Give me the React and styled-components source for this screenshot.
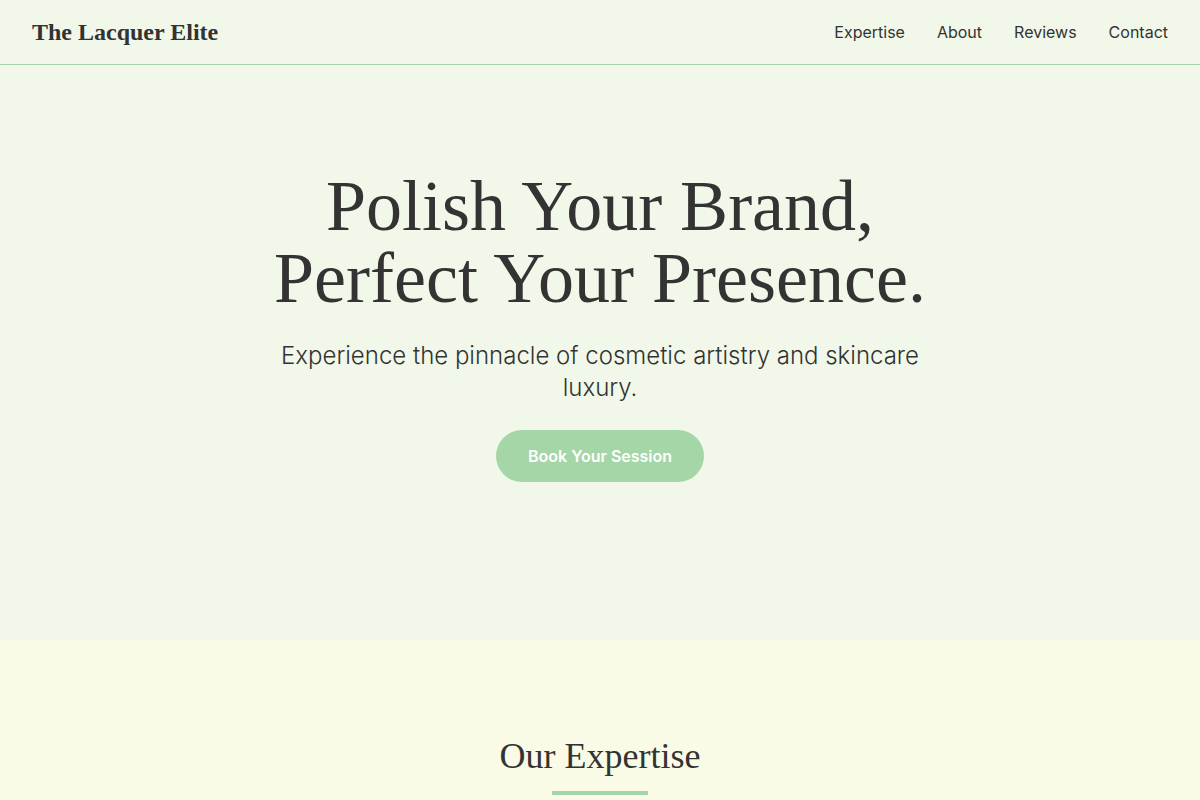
import styled, { createGlobalStyle } from 'styled-components';

const GlobalStyle = createGlobalStyle`
    * { box-sizing: border-box; }
    body {
        margin: 0;
        background: #f1f8e9;
        color: #333333;
        font-family: Inter, "Noto Sans", sans-serif;
    }
`

const Header = styled.header`
    height: 65px;
    display: flex;
    align-items: center;
    justify-content: space-between;
    padding: 0 32px;
    border-bottom: 1px solid #a5d6a7;
    background: #f1f8e9;
`

const Logo = styled.div`
    font-family: "Liberation Serif", "Times New Roman", serif;
    font-weight: bold;
    font-size: 24px;
    color: #333333;
`

const Nav = styled.nav`
    display: flex;
    gap: 32px;
`

const NavLink = styled.a`
    font-size: 16px;
    color: #333333;
    text-decoration: none;
    cursor: pointer;
`

const Hero = styled.section`
    height: 575px;
    display: flex;
    flex-direction: column;
    align-items: center;
    padding: 105px 24px 0;
    text-align: center;
`

const Title = styled.h1`
    font-family: "Liberation Serif", "Times New Roman", serif;
    font-weight: normal;
    font-size: 72px;
    line-height: 72px;
    margin: 0 0 26px;
    color: #333333;
`

const Subtitle = styled.p`
    font-size: 24px;
    font-weight: 300;
    line-height: 32px;
    max-width: 650px;
    margin: 0 0 26px;
    color: #333333;
`

const Button = styled.button`
    font-family: Inter, "Noto Sans", sans-serif;
    font-size: 16px;
    font-weight: 600;
    color: #ffffff;
    background: #a5d6a7;
    border: none;
    border-radius: 999px;
    width: 208px;
    height: 52px;
    cursor: pointer;
`

const Section = styled.section`
    background: #f9fbe7;
    padding: 95px 24px 64px;
    display: flex;
    flex-direction: column;
    align-items: center;
`

const SectionTitle = styled.h2`
    font-family: "Liberation Serif", "Times New Roman", serif;
    font-weight: normal;
    font-size: 36px;
    margin: 0 0 14px;
    color: #333333;
`

const Bar = styled.div`
    width: 96px;
    height: 4px;
    background: #a5d6a7;
`

export default function App() {
    const links = ['Expertise', 'About', 'Reviews', 'Contact']

    return (
        <>
            <GlobalStyle />
            <Header>
                <Logo>The Lacquer Elite</Logo>
                <Nav>
                    {links.map((l) => <NavLink key={l}>{l}</NavLink>)}
                </Nav>
            </Header>
            <Hero>
                <Title>Polish Your Brand,<br />Perfect Your Presence.</Title>
                <Subtitle>Experience the pinnacle of cosmetic artistry and skincare luxury.</Subtitle>
                <Button>Book Your Session</Button>
            </Hero>
            <Section>
                <SectionTitle>Our Expertise</SectionTitle>
                <Bar />
            </Section>
        </>
    )
}
